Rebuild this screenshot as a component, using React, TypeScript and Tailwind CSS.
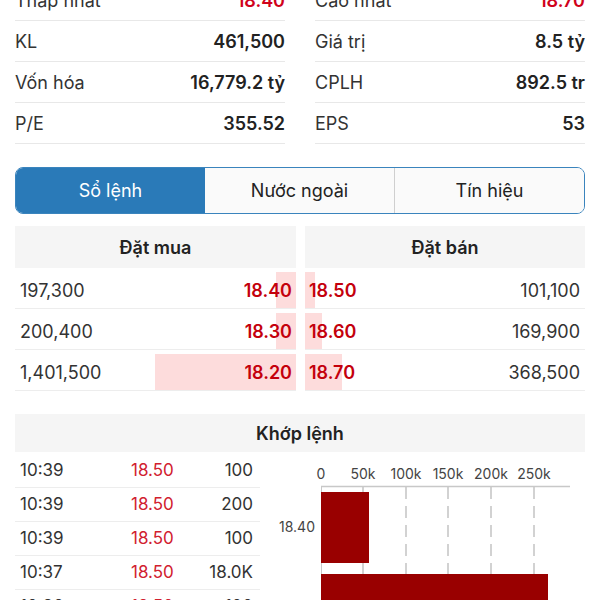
import React from "react";

const font = { fontFamily: "Inter, 'Noto Sans', sans-serif" };

const stats: [string, string, string, string, boolean][] = [
  ["Thấp nhất", "18.40", "Cao nhất", "18.70", true],
  ["KL", "461,500", "Giá trị", "8.5 tỷ", false],
  ["Vốn hóa", "16,779.2 tỷ", "CPLH", "892.5 tr", false],
  ["P/E", "355.52", "EPS", "53", false],
];

const bids = [
  { vol: "197,300", price: "18.40", n: 197300 },
  { vol: "200,400", price: "18.30", n: 200400 },
  { vol: "1,401,500", price: "18.20", n: 1401500 },
];

const asks = [
  { vol: "101,100", price: "18.50", n: 101100 },
  { vol: "169,900", price: "18.60", n: 169900 },
  { vol: "368,500", price: "18.70", n: 368500 },
];

const trades = [
  ["10:39", "18.50", "100"],
  ["10:39", "18.50", "200"],
  ["10:39", "18.50", "100"],
  ["10:37", "18.50", "18.0K"],
  ["10:36", "18.50", "100"],
];

function StatCell({ label, value, red }: { label: string; value: string; red: boolean }) {
  return (
    <div className="flex h-[41px] items-center justify-between border-b border-[#e8e8e8] text-[18px]">
      <span className="text-[#333]">{label}</span>
      <span className={red ? "font-semibold text-[#d0021b]" : "font-semibold text-[#222]"}>{value}</span>
    </div>
  );
}

function Chart() {
  const ticks = [
    { x: 61, t: "0" },
    { x: 103, t: "50k" },
    { x: 146, t: "100k" },
    { x: 188, t: "150k" },
    { x: 231, t: "200k" },
    { x: 274, t: "250k" },
  ];
  return (
    <svg width="330" height="148" viewBox="0 0 330 148" className="block">
      {ticks.map((k) => (
        <text key={k.t} x={k.x} y={25} textAnchor="middle" fontSize="14" fill="#444" style={font}>
          {k.t}
        </text>
      ))}
      <line x1="61" y1="32.5" x2="310" y2="32.5" stroke="#c8c8c8" strokeWidth="1.5" />
      <line x1="61.5" y1="32" x2="61.5" y2="148" stroke="#c8c8c8" strokeWidth="1" />
      {ticks.slice(1).map((k) => (
        <line key={k.t} x1={k.x} y1="33" x2={k.x} y2="148" stroke="#c4c4c4" strokeWidth="1.5" strokeDasharray="12 7" />
      ))}
      <rect x="61" y="38" width="48" height="71" fill="#990000" />
      <rect x="61" y="120" width="227" height="40" fill="#990000" />
      <text x="55" y="78" textAnchor="end" fontSize="14" fill="#444" style={font}>
        18.40
      </text>
    </svg>
  );
}

export default function App() {
  return (
    <div className="h-[600px] w-[600px] overflow-hidden bg-white" style={font}>
      <div className="-mt-[20px] grid grid-cols-2 gap-x-[30px] px-[15px]">
        {stats.map(([l1, v1, l2, v2, red]) => (
          <React.Fragment key={l1}>
            <StatCell label={l1} value={v1} red={red} />
            <StatCell label={l2} value={v2} red={red} />
          </React.Fragment>
        ))}
      </div>

      <div className="mx-[15px] mt-[23px] flex h-[47px] overflow-hidden rounded-[8px] border border-[#3a84bd] text-[18px]">
        <div className="flex flex-1 items-center justify-center bg-[#2a7ab8] text-white">Sổ lệnh</div>
        <div className="flex flex-1 items-center justify-center border-r border-[#cfcfcf] bg-[#fafafa] text-[#222]">Nước ngoài</div>
        <div className="flex flex-1 items-center justify-center bg-[#fafafa] text-[#222]">Tín hiệu</div>
      </div>

      <div className="mx-[15px] mt-[12px] grid grid-cols-[281px_1fr] gap-x-[9px]">
        <div>
          <div className="flex h-[42px] items-center justify-center bg-[#f5f5f5] text-[18px] font-semibold text-[#222]">Đặt mua</div>
          {bids.map((b) => (
            <div key={b.price} className="flex h-[41px] flex-col border-b border-[#ededed] pt-[4px] text-[18px]">
              <div className="relative flex flex-1 items-center justify-between pl-[5px] pr-[4px]">
                <div className="absolute inset-y-0 right-0 bg-[#fddcdc]" style={{ width: b.n / 9940 }} />
                <span className="relative text-[#333]">{b.vol}</span>
                <span className="relative font-semibold text-[#c4000c]">{b.price}</span>
              </div>
            </div>
          ))}
        </div>
        <div>
          <div className="flex h-[42px] items-center justify-center bg-[#f5f5f5] text-[18px] font-semibold text-[#222]">Đặt bán</div>
          {asks.map((a) => (
            <div key={a.price} className="flex h-[41px] flex-col border-b border-[#ededed] pt-[4px] text-[18px]">
              <div className="relative flex flex-1 items-center justify-between pl-[4px] pr-[5px]">
                <div className="absolute inset-y-0 left-0 bg-[#fddcdc]" style={{ width: a.n / 9940 }} />
                <span className="relative font-semibold text-[#c4000c]">{a.price}</span>
                <span className="relative text-[#333]">{a.vol}</span>
              </div>
            </div>
          ))}
        </div>
      </div>

      <div className="mx-[15px] mt-[23px] flex h-[38px] items-center justify-center bg-[#f5f5f5] text-[18px] font-semibold text-[#222]">
        Khớp lệnh
      </div>
      <div className="flex pt-[2px]">
        <div className="ml-[15px] w-[245px] shrink-0">
          {trades.map((t, i) => (
            <div key={i} className="grid h-[34px] grid-cols-[111px_1fr_auto] items-center border-b border-[#ededed] pl-[5px] pr-[7px] text-[17px]">
              <span className="text-[#333]">{t[0]}</span>
              <span className="text-[#d1202f]">{t[1]}</span>
              <span className="text-[#333]">{t[2]}</span>
            </div>
          ))}
        </div>
        <Chart />
      </div>
    </div>
  );
}
